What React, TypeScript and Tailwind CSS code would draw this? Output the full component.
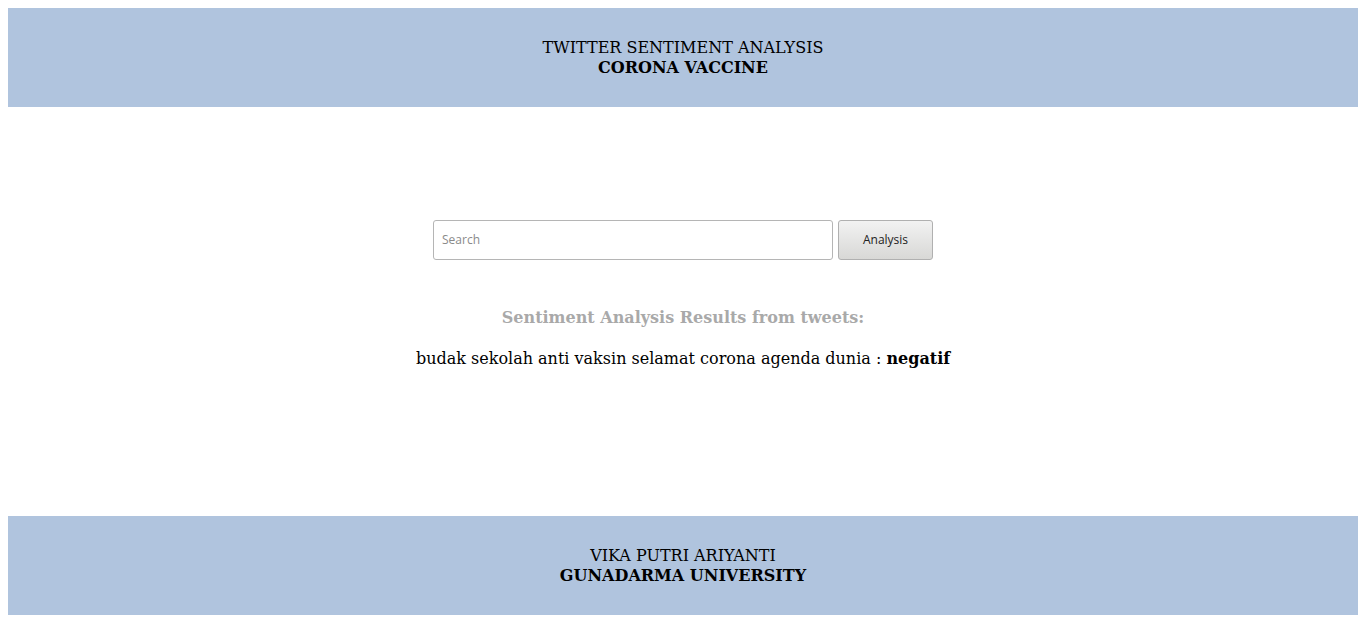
import React from "react";

const App = () => {
  return (
    <div className="p-2 bg-white min-h-screen" style={{ fontFamily: '"DejaVu Serif", serif' }}>
      <header className="bg-[#b0c4de] h-[99px] flex flex-col items-center justify-center text-black text-base leading-5">
        <span>TWITTER SENTIMENT ANALYSIS</span>
        <span className="font-bold">CORONA VACCINE</span>
      </header>

      <main className="h-[409px] flex flex-col items-center pt-[113px]">
        <form className="flex gap-[5px]" onSubmit={(e) => e.preventDefault()}>
          <input
            type="text"
            placeholder="Search"
            className="w-[400px] h-10 border border-[#b5b5b5] rounded-[3px] px-2 pb-px text-xs text-[#555] placeholder:text-[#8a8a8a] outline-none"
            style={{ fontFamily: '"Open Sans", sans-serif' }}
          />
          <button
            type="submit"
            className="w-[95px] h-10 border border-[#b0b0b0] rounded-[3px] bg-gradient-to-b from-[#f2f2f2] to-[#d8d8d6] text-xs text-[#222]"
            style={{ fontFamily: '"Open Sans", sans-serif' }}
          >
            Analysis
          </button>
        </form>

        <h3 className="mt-[46px] text-base leading-6 font-bold text-[#a9a9a9]">
          Sentiment Analysis Results from tweets:
        </h3>
        <p className="mt-[17px] text-base leading-6 text-black">
          budak sekolah anti vaksin selamat corona agenda dunia : <b>negatif</b>
        </p>
      </main>

      <footer className="bg-[#b0c4de] h-[99px] flex flex-col items-center justify-center text-black text-base leading-5">
        <span>VIKA PUTRI ARIYANTI</span>
        <span className="font-bold">GUNADARMA UNIVERSITY</span>
      </footer>
    </div>
  );
};

export default App;
